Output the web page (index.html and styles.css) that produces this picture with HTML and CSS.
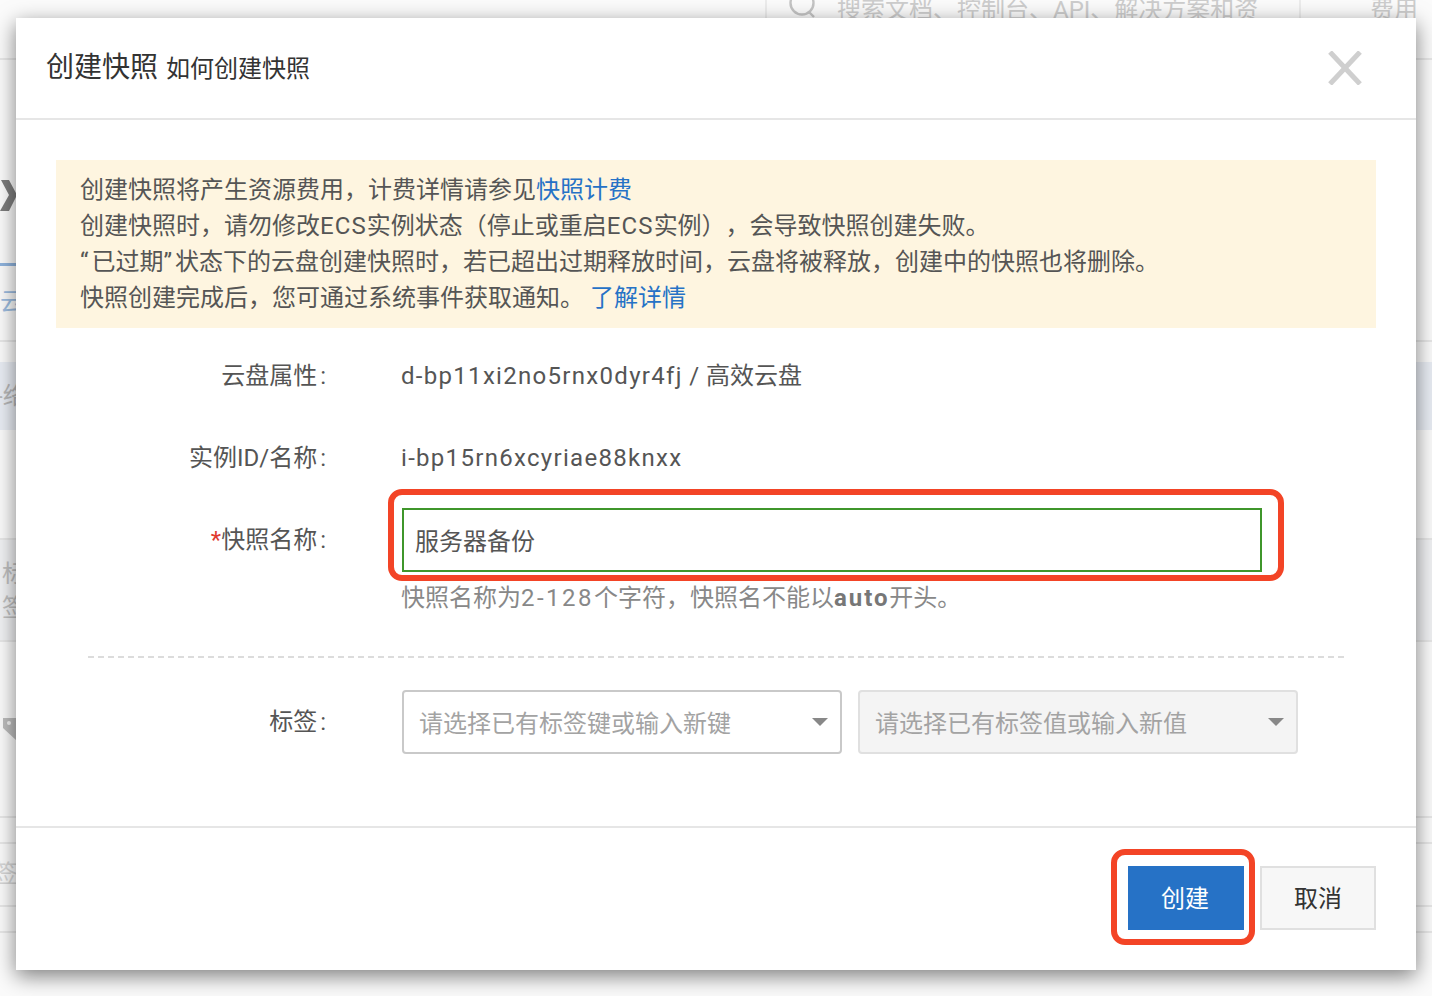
FILE: index.html
```html
<!DOCTYPE html>
<html lang="zh-CN">
<head>
<meta charset="utf-8">
<title>创建快照</title>
<link rel="stylesheet" href="styles.css">
</head>
<body>
<div class="page">
  <div class="backdrop">
    <div class="bg-top">
      <svg class="bg-search" width="30" height="34" viewBox="0 0 30 34"><circle cx="13" cy="11" r="11.5" fill="none" stroke="#c4c4c4" stroke-width="2.4"/><path d="M20 20l5 5" stroke="#c4c4c4" stroke-width="2.4"/></svg>
      <span class="bg-search-text">搜索文档、控制台、API、解决方案和资</span>
      <span class="bg-fee">费用</span>
    </div>
    <div class="bg-band-grey"></div>
    <div class="bg-line l58"></div>
    <svg class="bg-chevron" width="18" height="34" viewBox="0 0 18 34"><path d="M1 1h8l8 15-8 16H0l9-16z" fill="#7d7d7d"/></svg>
    <div class="bg-tab"></div>
    <div class="bg-yun">云</div>
    <div class="bg-band"></div>
    <div class="bg-net">-络</div>
    <div class="bg-biao">标</div>
    <div class="bg-qian">签</div>
    <svg class="bg-tag" width="16" height="26" viewBox="0 0 16 26"><path d="M2 2h14v23L2 12z" fill="#bdbdbd"/><circle cx="8" cy="7" r="2" fill="#f4f4f4"/></svg>
    <div class="bg-qian2">签</div>
    <div class="bg-line l340"></div>
    <div class="bg-line l538"></div>
    <div class="bg-line l641"></div>
    <div class="bg-line l816"></div>
    <div class="bg-line l842"></div>
    <div class="bg-line l905"></div>
    <div class="bg-line l931"></div>
  </div>

  <div class="dialog">
    <header class="dialog-head">
      <h1 class="dialog-title">创建快照</h1>
      <span class="dialog-sub">如何创建快照</span>
      <svg class="dialog-close" width="34" height="34" viewBox="0 0 34 34"><path d="M2 1l30 32M32 1L2 33" stroke="#cfcfcf" stroke-width="5" fill="none"/></svg>
    </header>
    <div class="dialog-body">
      <div class="notice">
        <p>创建快照将产生资源费用，计费详情请参见<a class="link">快照计费</a></p>
        <p>创建快照时，请勿修改<span class="ecs">ECS</span>实例状态（停止或重启<span class="ecs">ECS</span>实例），会导致快照创建失败。</p>
        <p><span class="q">“</span>已过期<span class="q">”</span>状态下的云盘创建快照时，若已超出过期释放时间，云盘将被释放，创建中的快照也将删除。</p>
        <p>快照创建完成后，您可通过系统事件获取通知。 <a class="link">了解详情</a></p>
      </div>
      <div class="row row-disk">
        <div class="label">云盘属性<span class="colon">:</span></div>
        <div class="value"><span class="id">d-bp11xi2no5rnx0dyr4fj</span><span class="sep"> / </span>高效云盘</div>
      </div>
      <div class="row row-inst">
        <div class="label">实例ID/名称<span class="colon">:</span></div>
        <div class="value"><span class="id">i-bp15rn6xcyriae88knxx</span></div>
      </div>
      <div class="row row-name">
        <div class="label label-field"><span class="req">*</span>快照名称<span class="colon">:</span></div>
        <div class="field">
          <div class="input">服务器备份</div>
          <div class="hint">快照名称为<span class="num">2-128</span>个字符，快照名不能以<b>auto</b>开头。</div>
        </div>
      </div>
      <div class="dash"></div>
      <div class="row row-tag">
        <div class="label label-field">标签<span class="colon">:</span></div>
        <div class="selects">
          <div class="select"><span>请选择已有标签键或输入新键</span><i class="caret"></i></div>
          <div class="select disabled"><span>请选择已有标签值或输入新值</span><i class="caret"></i></div>
        </div>
      </div>
    </div>
    <footer class="dialog-foot">
      <button class="btn primary">创建</button>
      <button class="btn">取消</button>
    </footer>
  </div>

  <div class="mark mark-input"></div>
  <div class="mark mark-btn"></div>
</div>
</body>
</html>
```
FILE: styles.css
```css
* { box-sizing: border-box; }
html, body { margin: 0; padding: 0; }
body { font-family: Roboto, "Noto Sans CJK SC", sans-serif; color: #555; text-spacing-trim: space-all; }
.page { position: relative; width: 1432px; height: 996px; overflow: hidden; background: #fbfbfb; }

.backdrop { position: absolute; inset: 0; color: #cdcdcd; font-size: 24px; }
.backdrop > * { position: absolute; }
.bg-top { left: 765px; top: 0; width: 667px; height: 18px; overflow: hidden; border-left: 2px solid #ececec; }
.bg-top > * { position: absolute; }
.bg-search { left: 22px; top: -8px; }
.bg-search-text { left: 70px; top: -6px; line-height: 32px; width: 440px; white-space: nowrap; }
.bg-top::after { content: ""; position: absolute; left: 532px; top: 0; width: 2px; height: 18px; background: #ececec; }
.bg-fee { left: 603px; top: -6px; line-height: 32px; }
.bg-line { left: 0; right: 0; height: 2px; background: #e8e8e8; }
.l58 { top: 58px; } .l340 { top: 340px; } .l538 { top: 538px; } .l641 { top: 640px; }
.l816 { top: 816px; } .l842 { top: 842px; } .l905 { top: 905px; } .l931 { top: 931px; }
.bg-band-grey { left: 0; right: 0; top: 538px; height: 102px; background: #f1f2f4; }
.bg-chevron { left: 0; top: 179px; }
.bg-tab { left: 0; top: 263px; width: 16px; height: 3px; background: #8fb3dd; }
.bg-yun { left: 0; top: 286px; color: #9dbce0; line-height: 32px; }
.bg-band { left: 0; right: 0; top: 362px; height: 68px; background: #e9edf4; }
.bg-net { left: -4px; top: 380px; line-height: 32px; color: #b8b8b8; white-space: nowrap; }
.bg-biao { left: 2px; top: 558px; line-height: 32px; color: #c0c0c0; }
.bg-qian { left: 2px; top: 592px; line-height: 32px; color: #c0c0c0; }
.bg-tag { left: 1px; top: 716px; }
.bg-qian2 { left: -6px; top: 858px; line-height: 32px; color: #d6d6d6; }

.dialog { position: absolute; left: 16px; top: 18px; width: 1400px; height: 952px; background: #fff; display: flex; flex-direction: column; box-shadow: 0 6px 20px rgba(0,0,0,.5); }
.dialog-head { height: 102px; flex: none; border-bottom: 2px solid #e6e6e6; display: flex; align-items: baseline; padding: 30px 0 0 30px; position: relative; }
.dialog-title { margin: 0; font-size: 28px; font-weight: 400; line-height: 40px; color: #333; }
.dialog-sub { margin-left: 8px; font-size: 24px; color: #333; line-height: 40px; }
.dialog-close { position: absolute; right: 54px; top: 33px; }
.dialog-body { flex: 1; padding: 40px 40px 0; }
.notice { height: 168px; background: #fef5e0; padding: 12px 24px; font-size: 24px; line-height: 36px; color: #555; }
.notice p { margin: 0; white-space: nowrap; }
.q { letter-spacing: 3px; }
.ecs { letter-spacing: 1.1px; }
.link { color: #2672c6; }
.row { display: flex; font-size: 24px; line-height: 36px; }
.label { width: 272px; flex: none; text-align: right; color: #555; white-space: nowrap; }
.label-field { padding-top: 14px; }
.colon { margin: 0 2px 0 3px; }
.value { margin-left: 73px; color: #555; white-space: nowrap; }
.id { letter-spacing: 1.3px; }
.sep { letter-spacing: .5px; }
.req { color: #e03a2f; }
.row-disk { margin-top: 30px; }
.row-inst { margin-top: 46px; }
.row-name { margin-top: 32px; }
.field { margin-left: 74px; }
.input { width: 860px; height: 64px; border: 2px solid #3f962b; padding: 14px 11px 0; line-height: 36px; color: #555; }
.hint { margin: 8px 0 0 -1px; color: #888; white-space: nowrap; line-height: 36px; }
.num { letter-spacing: 2.5px; }
.hint b { font-weight: 700; color: #777; letter-spacing: 1.9px; }
.dash { height: 0; margin: 40px 32px 0; border-top: 2px dashed #dcdcdc; }
.row-tag { margin-top: 32px; }
.selects { margin-left: 74px; display: flex; gap: 16px; }
.select { width: 440px; height: 64px; border: 2px solid #c9c9c9; border-radius: 4px; padding: 4px 15px 0; display: flex; align-items: center; justify-content: space-between; color: #a3a3a3; }
.select.disabled { background: #f4f4f4; border-color: #e0e0e0; }
.caret { width: 0; height: 0; border-left: 8px solid transparent; border-right: 8px solid transparent; border-top: 8px solid #888; margin: -4px -3px 0 0; }
.dialog-foot { height: 144px; flex: none; border-top: 2px solid #e6e6e6; display: flex; justify-content: flex-end; gap: 16px; padding: 38px 40px 0; }
.btn { width: 116px; height: 64px; border: 2px solid #e0e0e0; background: #f7f7f7; color: #333; font: inherit; font-size: 24px; padding: 0 0 4px; }
.btn.primary { background: #2672c6; border-color: #2672c6; color: #fff; padding-right: 2px; }

.mark { position: absolute; border: 6px solid #f34426; border-radius: 14px; }
.mark-input { left: 388px; top: 489px; width: 896px; height: 92px; }
.mark-btn { left: 1111px; top: 849px; width: 144px; height: 96px; }
```
